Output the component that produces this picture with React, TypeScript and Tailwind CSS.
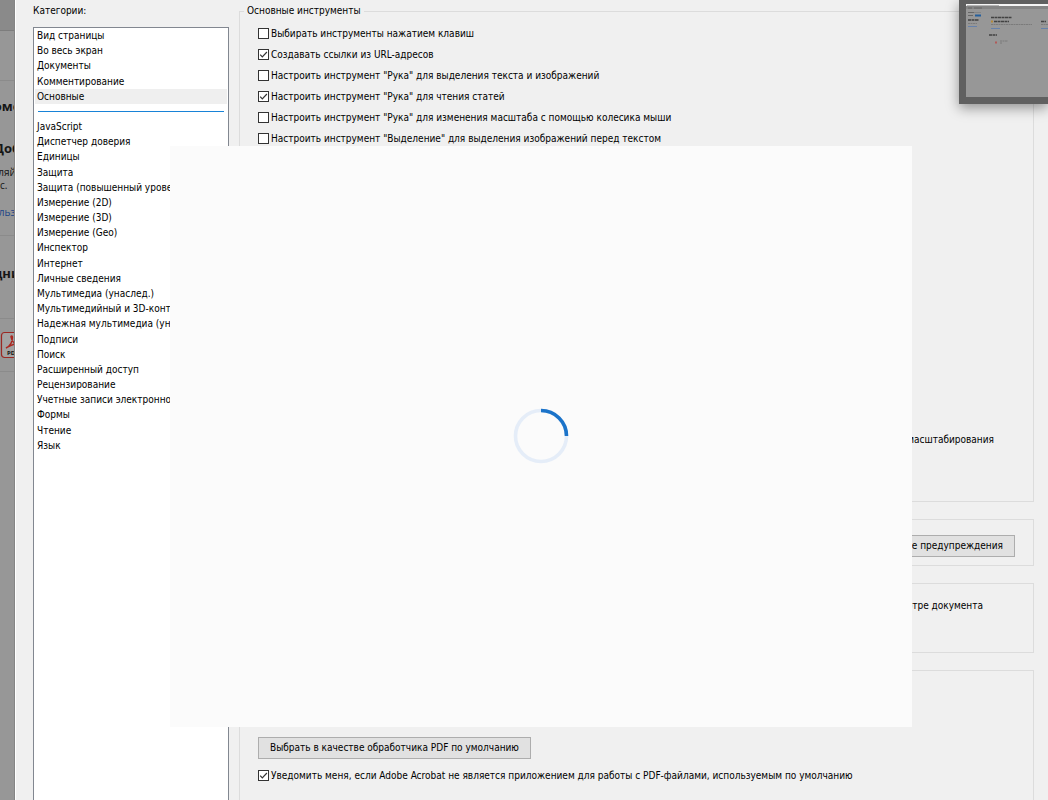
import clsx from 'clsx';
import React from 'react'

const mainCategories = [
  "Вид страницы",
  "Во весь экран",
  "Документы",
  "Комментирование",
  "Основные",
]

const otherCategories = [
  "JavaScript",
  "Диспетчер доверия",
  "Единицы",
  "Защита",
  "Защита (повышенный уровень)",
  "Измерение (2D)",
  "Измерение (3D)",
  "Измерение (Geo)",
  "Инспектор",
  "Интернет",
  "Личные сведения",
  "Мультимедиа (унаслед.)",
  "Мультимедийный и 3D-контент",
  "Надежная мультимедиа (унаслед.)",
  "Подписи",
  "Поиск",
  "Расширенный доступ",
  "Рецензирование",
  "Учетные записи электронной почты",
  "Формы",
  "Чтение",
  "Язык",
]

const tools = [
  { label: "Выбирать инструменты нажатием клавиш", checked: false },
  { label: "Создавать ссылки из URL-адресов", checked: true },
  { label: 'Настроить инструмент "Рука" для выделения текста и изображений', checked: false },
  { label: 'Настроить инструмент "Рука" для чтения статей', checked: true },
  { label: 'Настроить инструмент "Рука" для изменения масштаба с помощью колесика мыши', checked: false },
  { label: 'Настроить инструмент "Выделение" для выделения изображений перед текстом', checked: false },
]

function Check({ label, checked }: { label: string; checked: boolean }) {
  return (
    <label className="flex h-[21px] items-center gap-[2px] whitespace-nowrap">
      <span className="grid">
        <input
          type="checkbox"
          defaultChecked={checked}
          className="peer col-start-1 row-start-1 size-[11px] appearance-none border border-[#333] bg-white"
        />
        <svg
          viewBox="0 0 11 11"
          className="pointer-events-none invisible col-start-1 row-start-1 size-[11px] peer-checked:visible"
          fill="none"
          stroke="#333"
          strokeWidth="1.2"
        >
          <path d="M2.2 5.6l2.1 2.2 4.6-4.8" />
        </svg>
      </span>
      {label}
    </label>
  )
}

function Category({ name, selected }: { name: string; selected?: boolean }) {
  return (
    <li className="flex min-h-0 flex-1">
      <button
        className={clsx(
          "flex w-full items-center overflow-hidden pl-[2px] text-left leading-[15px] whitespace-nowrap",
          selected && "bg-[#efefef]"
        )}
      >
        {name}
      </button>
    </li>
  )
}

// the start page, dimmed behind the dialog
function Backdrop() {
  return (
    <aside className="flex w-[15px] shrink-0 flex-col overflow-hidden border-r border-[#858585] bg-[#979797] font-['Open_Sans',sans-serif] whitespace-nowrap text-[#151515]">
      <div className="h-[31px] shrink-0 border-b border-[#7d7d7d] bg-[#8a8a8a]" />
      <div className="h-[50px] shrink-0 border-b border-[#8b8b8b]" />
      <div className="flex h-[155px] shrink-0 flex-col items-center border-b border-[#8b8b8b] pt-[17px]">
        <b className="text-[13px] leading-4">оме</b>
        <b className="mt-[26px] text-[13px] leading-4">Доб</b>
        <span className="mt-[10px] text-[10px] leading-[13px]">ляй</span>
        <span className="self-start text-[10px] leading-[13px]">с.</span>
        <a href="#" className="mt-3 leading-4 text-[#1c4587]">льз</a>
      </div>
      <div className="flex h-[83px] shrink-0 flex-col items-center border-b border-[#8b8b8b] pt-[29px]">
        <b className="text-[13px] leading-4">дни</b>
      </div>
      <div className="flex h-[53px] shrink-0 items-center border-b border-[#8b8b8b]">
        <svg viewBox="0 0 28 28" className="size-7 shrink-0">
          <rect x="1.5" y="1.5" width="25" height="25" rx="3" fill="#a3a3a3" stroke="#9b2823" strokeWidth="1.2" />
          <path
            d="M6 17c4-2 6.500-6 6.500-11 0-1.500-1.800-1.500-1.500 0 .6 4 4 8 9 8 1.500-.5 0-2-3-1.500-4 .5-7 2-11 4.500z"
            fill="none"
            stroke="#ab2720"
            strokeWidth="1.400"
          />
          <text x="7" y="24" fontSize="6" fontWeight="700" fill="#111">PDF</text>
        </svg>
      </div>
    </aside>
  )
}

function Preview() {
  return (
    <div className="absolute top-0 right-0 h-[104px] w-[89px] border-b-[7px] border-l-[7px] border-[#606060] bg-[#606060] pt-1 shadow-[0_4px_12px_rgba(0,0,0,0.4)]">
      <svg viewBox="0 0 82 93" className="h-[93px] w-[82px]">
        <rect width="82" height="93" fill="#979797" />
        <rect width="82" height="2" fill="#f5f5f5" />
        <rect y="2" width="82" height="3" fill="#858585" />
        <g strokeWidth="1">
          <path d="M1 1.500h32" stroke="#b5b5b5" />
          <path d="M2 4h4m2 0h8M2 8.500h6M2 11.500h5" stroke="#676767" />
          <path d="M8 8.500h7" stroke="#858585" />
          <path d="M9 11.500h6" stroke="#245f9c" strokeWidth="2" />
          <path d="M2 16h11M25 13.500h21M28 17.500h15M75 17.500h5M23 31h8" stroke="#424242" strokeWidth="1.5" strokeDasharray="3 .5" />
          <path d="M2 19.500h9M25 20.500h41M75 20.500h7M34 37h8M34 39h2" stroke="#7b7b7b" strokeDasharray="2 .5" />
          <path d="M2 22.500h9M25 24.500h9M75 24.500h7" stroke="#6681aa" />
          <path d="M25 17.500h2" stroke="#b58938" strokeWidth="2" />
          <path d="M29 38.500h2" stroke="#b25a59" strokeWidth="2" />
        </g>
      </svg>
    </div>
  )
}

function Loading() {
  return (
    <div
      role="dialog"
      aria-label="Загрузка"
      className="absolute top-[146px] right-[136px] left-[170px] flex h-[581px] items-center justify-center bg-[#fbfbfb] pb-px"
    >
      <svg viewBox="0 0 56 56" className="size-14" fill="none" strokeWidth="3.600">
        <circle cx="28" cy="28" r="25.500" stroke="#e5edf8" />
        <path d="M28 2.500A25.500 25.500 0 0 1 53.500 28" stroke="#1b73c9" />
      </svg>
    </div>
  )
}

const group = "border border-[#dcdcdc]"
const button = "border border-[#adadad] bg-[#e1e1e1] h-[22px] whitespace-nowrap"

function App() {
  return (
    <div className="relative flex h-screen overflow-hidden bg-[#f0f0f0] font-['DejaVu_Sans_Condensed','Open_Sans',sans-serif] text-[10px] leading-4 text-black">
      <Backdrop />
      <section className="flex w-[214px] shrink-0 flex-col border-l border-white pt-[3px] pl-[17px]">
        <h2 id="categories">Категории:</h2>
        <nav
          aria-labelledby="categories"
          className="mt-2 flex-1 border border-b-0 border-[#828790] bg-white px-px"
        >
          <ul className="flex h-[425px] flex-col">
            {mainCategories.map((name) => (
              <Category key={name} name={name} selected={name === "Основные"} />
            ))}
            <li className="flex min-h-0 flex-1 items-center px-[3px]">
              <hr className="h-px w-full border-0 bg-[#1883d7]" />
            </li>
            {otherCategories.map((name) => (
              <Category key={name} name={name} />
            ))}
          </ul>
        </nav>
      </section>

      <main className="flex min-w-0 flex-1 flex-col pt-[3px] pr-[14px] pl-[10px]">
        <fieldset className={clsx(group, "pt-1 pb-[53px] pl-[18px]")}>
          <legend className="-ml-[14px] px-[3px]">Основные инструменты</legend>
          {tools.map((tool) => (
            <Check key={tool.label} {...tool} />
          ))}
          <p className="mt-[283px] pr-[39px] text-right">масштабирования</p>
        </fieldset>

        <fieldset className={clsx(group, "mt-[17px] flex justify-end pt-[15px] pr-[18px] pb-2")}>
          <button className={clsx(button, "px-[11px]")}>Восстановить все предупреждения</button>
        </fieldset>

        <fieldset className={clsx(group, "mt-[17px] pt-[14px] pr-[50px] pb-[38px]")}>
          <p className="text-right">при просмотре документа</p>
        </fieldset>

        <fieldset className={clsx(group, "mt-[17px] flex-1 border-b-0 pt-[66px] pl-[18px]")}>
          <button className={clsx(button, "px-[11px]")}>
            Выбрать в качестве обработчика PDF по умолчанию
          </button>
          <div className="mt-[6px]">
            <Check
              label="Уведомить меня, если Adobe Acrobat не является приложением для работы с PDF-файлами, используемым по умолчанию"
              checked
            />
          </div>
        </fieldset>
      </main>

      <Loading />
      <Preview />
    </div>
  )
}

export default App
